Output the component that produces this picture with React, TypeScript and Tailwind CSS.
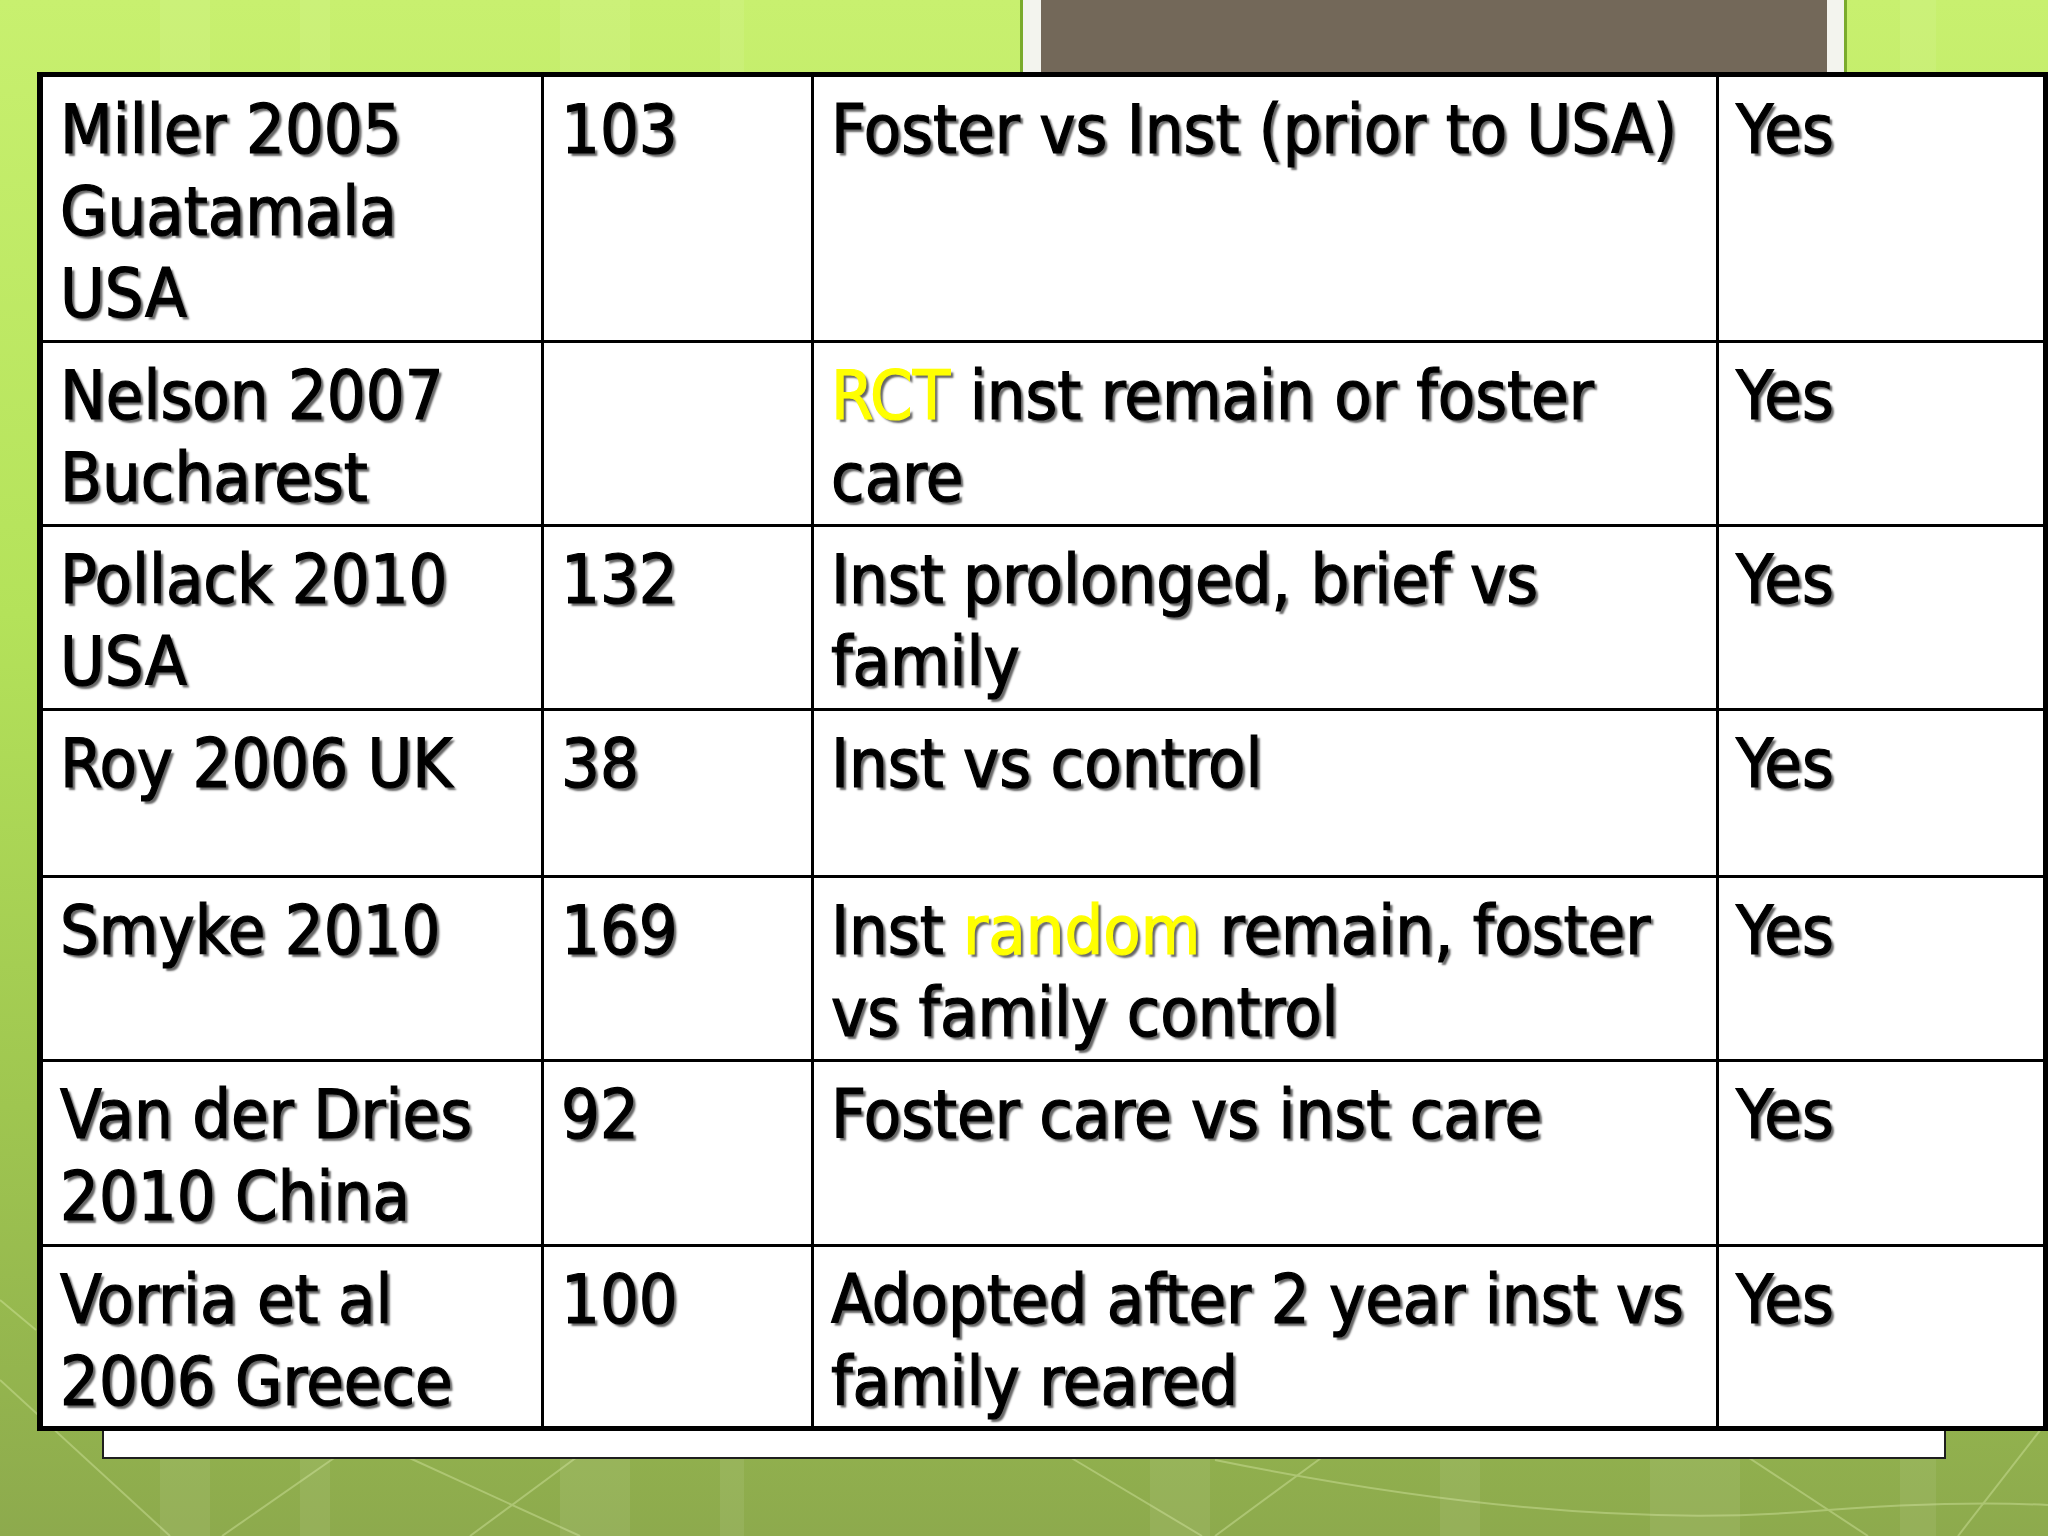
import React from "react";

type Seg = { t: string; y?: boolean };
type Cell = Seg[][];

const rows: { c1: string[]; c2: string; c3: Cell; c4: string }[] = [
  { c1: ["Miller 2005", "Guatamala", "USA"], c2: "103", c3: [[{ t: "Foster vs Inst (prior to USA)" }]], c4: "Yes" },
  { c1: ["Nelson 2007", "Bucharest"], c2: "", c3: [[{ t: "RCT", y: true }, { t: " inst remain or foster" }], [{ t: "care" }]], c4: "Yes" },
  { c1: ["Pollack 2010", "USA"], c2: "132", c3: [[{ t: "Inst prolonged, brief vs" }], [{ t: "family" }]], c4: "Yes" },
  { c1: ["Roy 2006 UK"], c2: "38", c3: [[{ t: "Inst vs control" }]], c4: "Yes" },
  { c1: ["Smyke 2010"], c2: "169", c3: [[{ t: "Inst " }, { t: "random", y: true }, { t: " remain, foster" }], [{ t: "vs family control" }]], c4: "Yes" },
  { c1: ["Van der Dries", "2010 China"], c2: "92", c3: [[{ t: "Foster care vs inst care" }]], c4: "Yes" },
  { c1: ["Vorria et al", "2006 Greece"], c2: "100", c3: [[{ t: "Adopted after 2 year inst vs" }], [{ t: "family reared" }]], c4: "Yes" },
];

const cellCls =
  "bg-white pl-[17px] pt-[12px] text-[68px] leading-[82px] tracking-[0px] text-black [text-shadow:3px_3px_2px_rgba(0,0,0,0.6)] [-webkit-text-stroke:1.2px_currentcolor] whitespace-nowrap";

export default function App() {
  return (
    <div className="relative w-[2048px] h-[1536px] overflow-hidden bg-[linear-gradient(180deg,#c8f06f_0%,#b4e25a_40%,#9fc650_72%,#8daa4d_100%)] font-['DejaVu_Sans_Condensed','DejaVu_Sans',sans-serif] [font-stretch:condensed]">
      <svg className="absolute inset-0" width="2048" height="1536" viewBox="0 0 2048 1536">
        <g fill="#ffffff" opacity="0.07">
          <rect x="160" y="0" width="50" height="1536" />
          <rect x="300" y="0" width="30" height="1536" />
          <rect x="560" y="0" width="70" height="1536" />
          <rect x="720" y="0" width="24" height="1536" />
          <rect x="1150" y="0" width="60" height="1536" />
          <rect x="1440" y="0" width="40" height="1536" />
          <rect x="1650" y="0" width="90" height="1536" />
          <rect x="1900" y="0" width="36" height="1536" />
        </g>
        <g stroke="#e6f5b8" strokeWidth="2" fill="none" opacity="0.35">
          <line x1="0" y1="1380" x2="170" y2="1536" />
          <line x1="222" y1="1536" x2="360" y2="1440" />
          <line x1="392" y1="1450" x2="580" y2="1536" />
          <line x1="470" y1="1536" x2="600" y2="1440" />
          <line x1="1058" y1="1450" x2="1202" y2="1536" />
          <line x1="1332" y1="1450" x2="1215" y2="1536" />
          <line x1="1737" y1="1450" x2="1868" y2="1536" />
          <line x1="2048" y1="1420" x2="1958" y2="1536" />
          <line x1="0" y1="1300" x2="36" y2="1330" />
          <path d="M1215 1460 Q1560 1530 1802 1512 Q1950 1500 2048 1505" />
        </g>
      </svg>
      <div className="relative flex flex-col">
        <div className="ml-[1020px] h-[72px] w-[827px] border-x-[3px] border-[#7aab2c] bg-[#f3f4ee] pl-[18px] pr-[17px]">
          <div className="h-full bg-[#736859]" />
        </div>
        <div className="ml-[37px] w-[2011px] border-[5px] border-l-[6px] border-black bg-black grid grid-cols-[498px_267px_902px_324px] grid-rows-[263px_181px_181px_164px_181px_182px_179px] gap-[3px]">
          {rows.map((r, i) => (
            <React.Fragment key={i}>
              <div className={cellCls}>
                {r.c1.map((l, j) => (
                  <div key={j}>{l}</div>
                ))}
              </div>
              <div className={cellCls}>{r.c2}</div>
              <div className={cellCls}>
                {r.c3.map((line, j) => (
                  <div key={j}>
                    {line.map((s, k) => (
                      <span key={k} className={s.y ? "text-[#ffff00]" : ""}>
                        {s.t}
                      </span>
                    ))}
                  </div>
                ))}
              </div>
              <div className={cellCls}>{r.c4}</div>
            </React.Fragment>
          ))}
        </div>
        <div className="ml-[102px] w-[1844px] h-[28px] bg-white border-2 border-t-0 border-[#1e1e1e]" />
      </div>
    </div>
  );
}
